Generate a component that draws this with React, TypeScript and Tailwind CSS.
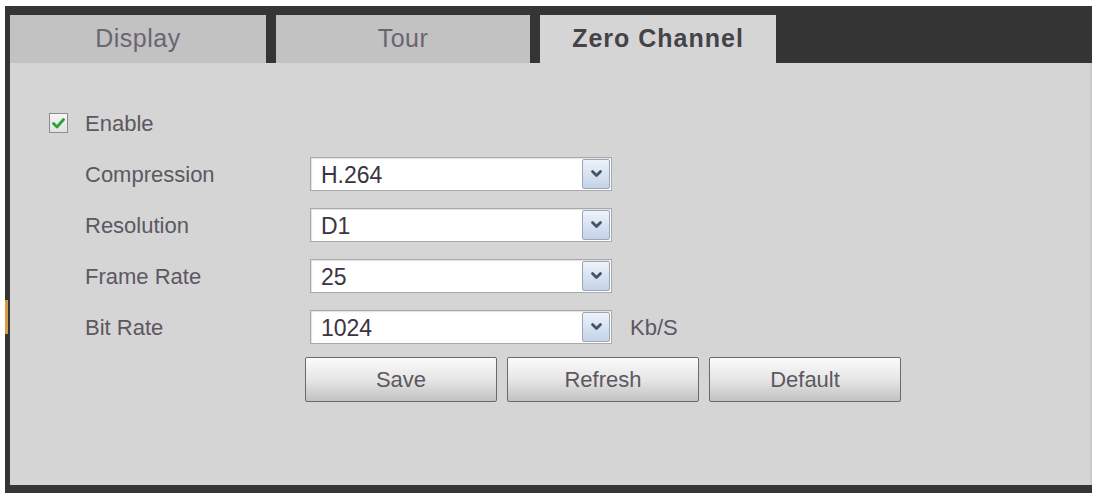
import React from "react";

function Chevron() {
  return (
    <svg width="13" height="10" viewBox="0 0 13 10">
      <path d="M2.5 2.5 L6.5 6.5 L10.5 2.5" fill="none" stroke="#44536a" strokeWidth="2.8" strokeLinecap="round" strokeLinejoin="round" />
    </svg>
  );
}

function Select({ value }: { value: string }) {
  return (
    <div className="w-[302px] h-[34px] border border-[#a9a9a9] bg-white flex items-center shadow-[inset_1px_1px_1px_rgba(0,0,0,0.12)]">
      <div className="flex-1 pl-[10px] text-[23px] leading-none text-[#3a3540] pt-[2px]">{value}</div>
      <div className="w-[28px] h-[30px] mr-[1px] border border-[#9aa6b8] rounded-[2px] bg-gradient-to-b from-[#eef3fa] to-[#c3d3e8] flex items-center justify-center">
        <Chevron />
      </div>
    </div>
  );
}

function Btn({ label }: { label: string }) {
  return (
    <div className="w-[192px] h-[45px] border border-[#6a6a6a] rounded-[2px] bg-gradient-to-b from-[#fbfbfb] via-[#e6e6e6] to-[#c2c2c2] flex items-center justify-center text-[22px] text-[#5c5860]">
      {label}
    </div>
  );
}

function Row({ label, value, unit }: { label: string; value: string; unit?: string }) {
  return (
    <div className="flex items-center h-[34px] pl-[75px]">
      <div className="w-[225px] text-[22px] text-[#5c5862]">{label}</div>
      <Select value={value} />
      {unit && <div className="ml-[18px] text-[22px] text-[#5c5862]">{unit}</div>}
    </div>
  );
}

export default function App() {
  return (
    <div className="w-[1095px] h-[496px] bg-white pt-[6px] pl-[5px] font-['Liberation_Sans',Arial,sans-serif] overflow-hidden">
      <div className="flex w-[1087px] h-[487px]">
        <div className="w-[5px] flex flex-col bg-[#353535]">
          <div className="h-[294px]" />
          <div className="h-[34px] w-[3px] bg-[#d49a45]" />
        </div>
        <div className="flex-1 flex flex-col">
          <div className="h-[9px] bg-[#353535]" />
          <div className="h-[48px] flex bg-[#353535]">
            <div className="w-[256px] bg-[#c2c2c2] flex items-center justify-center text-[25px] tracking-[0.5px] text-[#6a6670]">Display</div>
            <div className="w-[10px]" />
            <div className="w-[254px] bg-[#c2c2c2] flex items-center justify-center text-[25px] tracking-[0.5px] text-[#6a6670]">Tour</div>
            <div className="w-[10px]" />
            <div className="w-[236px] bg-[#d5d5d5] flex items-center justify-center text-[25px] tracking-[1px] font-bold text-[#454348]">Zero Channel</div>
          </div>
          <div className="flex-1 bg-[#d5d5d5] border-r-2 border-[#c9c9c9] pt-[43px] flex flex-col gap-[17px]">
            <div className="flex items-center h-[34px] pl-[39px]">
              <div className="w-[19px] h-[20px] border border-[#8c8c8c] bg-gradient-to-b from-[#f6f6f6] to-[#e2e2e2] flex items-center justify-center">
                <svg width="13" height="11" viewBox="0 0 13 11">
                  <path d="M1.5 5.5 L5 9 L11.5 1.5" fill="none" stroke="#2aa33a" strokeWidth="2.8" strokeLinecap="round" strokeLinejoin="round" />
                </svg>
              </div>
              <div className="ml-[17px] text-[22px] text-[#5c5862]">Enable</div>
            </div>
            <Row label="Compression" value="H.264" />
            <Row label="Resolution" value="D1" />
            <Row label="Frame Rate" value="25" />
            <Row label="Bit Rate" value="1024" unit="Kb/S" />
            <div className="flex gap-[10px] pl-[295px] -mt-[4px]">
              <Btn label="Save" />
              <Btn label="Refresh" />
              <Btn label="Default" />
            </div>
          </div>
          <div className="h-[8px] bg-[#353535]" />
        </div>
      </div>
    </div>
  );
}
